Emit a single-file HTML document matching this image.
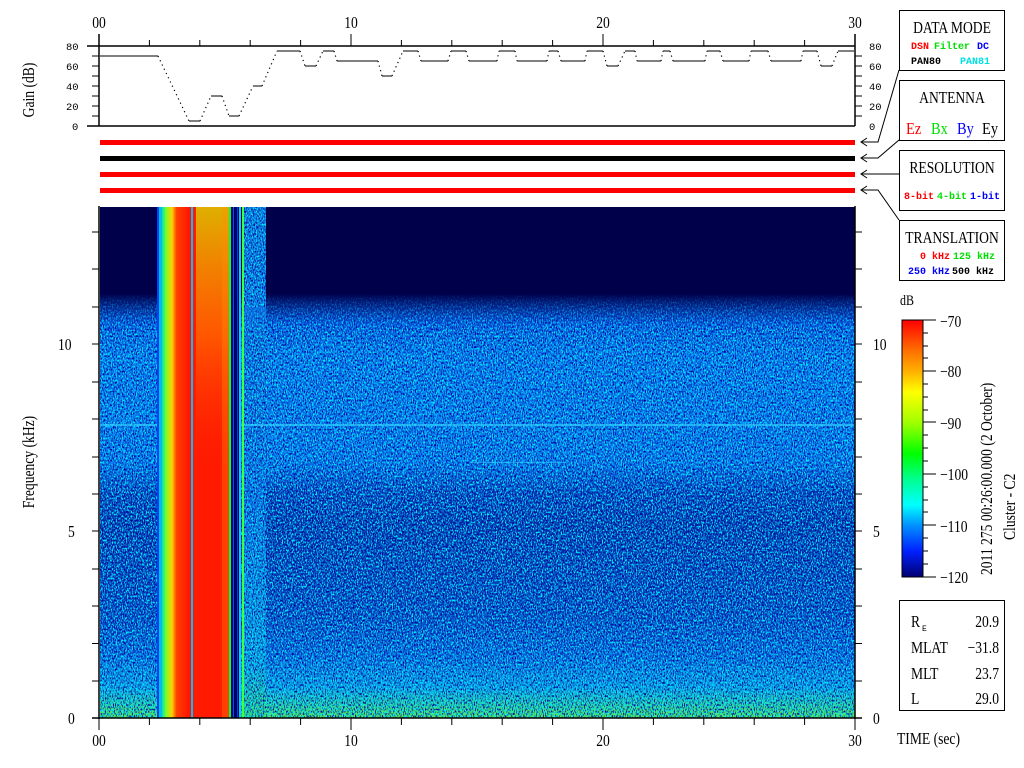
<!DOCTYPE html>
<html><head><meta charset="utf-8"><style>
html,body{margin:0;padding:0;background:#fff;width:1024px;height:768px;overflow:hidden}
svg{display:block}
.ser{font-family:"Liberation Serif",serif}
.mono{font-family:"Liberation Mono",monospace}
</style></head><body>
<svg width="1024" height="768" viewBox="0 0 1024 768" xmlns="http://www.w3.org/2000/svg">
<defs>
<linearGradient id="bg" x1="0" y1="207" x2="0" y2="718" gradientUnits="userSpaceOnUse">
<stop offset="0" stop-color="#00004a"/>
<stop offset="0.17" stop-color="#00004a"/>
<stop offset="0.23" stop-color="#0a50e0"/>
<stop offset="0.29" stop-color="#0c70f4"/>
<stop offset="0.5" stop-color="#0c6cf0"/>
<stop offset="0.56" stop-color="#0a34b8"/>
<stop offset="0.62" stop-color="#0828a8"/>
<stop offset="0.8" stop-color="#0a3cc0"/>
<stop offset="0.88" stop-color="#0c60e0"/>
<stop offset="0.94" stop-color="#10a0e8"/>
<stop offset="0.97" stop-color="#30d0a0"/>
<stop offset="1" stop-color="#60f040"/>
</linearGradient>
<linearGradient id="fade" x1="0" y1="207" x2="0" y2="718" gradientUnits="userSpaceOnUse">
<stop offset="0.17" stop-color="#000"/>
<stop offset="0.24" stop-color="#fff"/>
<stop offset="1" stop-color="#fff"/>
</linearGradient>
<mask id="m"><rect x="0" y="207" width="1024" height="511" fill="url(#fade)"/></mask>
<linearGradient id="side" x1="0" y1="207" x2="0" y2="718" gradientUnits="userSpaceOnUse">
<stop offset="0" stop-color="#1070e0"/>
<stop offset="0.55" stop-color="#1068e8"/>
<stop offset="0.9" stop-color="#10a0e0"/>
<stop offset="1" stop-color="#40e060"/>
</linearGradient>
<linearGradient id="cb" x1="0" y1="0" x2="0" y2="1">
<stop offset="0" stop-color="#ff0000"/>
<stop offset="0.12" stop-color="#ff7000"/>
<stop offset="0.2" stop-color="#ffb000"/>
<stop offset="0.28" stop-color="#ffff00"/>
<stop offset="0.4" stop-color="#a0ff00"/>
<stop offset="0.52" stop-color="#00ff00"/>
<stop offset="0.62" stop-color="#00ff90"/>
<stop offset="0.72" stop-color="#00ffff"/>
<stop offset="0.8" stop-color="#0090ff"/>
<stop offset="0.9" stop-color="#0020ff"/>
<stop offset="1" stop-color="#000070"/>
</linearGradient>
<linearGradient id="band" x1="0" y1="0" x2="1" y2="0">
<stop offset="0" stop-color="#00e0c0"/>
<stop offset="0.15" stop-color="#80ff20"/>
<stop offset="0.35" stop-color="#ffd000"/>
<stop offset="0.5" stop-color="#ff4000"/>
<stop offset="1" stop-color="#ff1000"/>
</linearGradient>
<linearGradient id="topy" x1="0" y1="0" x2="0" y2="1">
<stop offset="0" stop-color="#d0f000" stop-opacity="0.7"/>
<stop offset="0.5" stop-color="#ffb000" stop-opacity="0.4"/>
<stop offset="1" stop-color="#ff4000" stop-opacity="0"/>
</linearGradient>
<filter id="spk" x="0" y="0" width="1" height="1">
<feTurbulence type="fractalNoise" baseFrequency="0.9 0.45" numOctaves="1" seed="3"/>
<feColorMatrix values="0 0 0 0 0  0 0 0 0 0  0 0 0 0 0.3  4 0 0 0 -1.9"/>
</filter>
<filter id="spk2" x="0" y="0" width="1" height="1">
<feTurbulence type="fractalNoise" baseFrequency="0.8 0.5" numOctaves="1" seed="9"/>
<feColorMatrix values="0 0 0 0 0  0 0 0 0 0.85  0 0 0 0 1  0 5 0 0 -2.2"/>
</filter>
</defs>

<!-- spectrogram -->
<rect x="100" y="207" width="755" height="511" fill="url(#bg)"/>
<rect x="244" y="207" width="22" height="511" fill="url(#side)"/>
<g mask="url(#m)">
<rect x="100" y="280" width="755" height="438" filter="url(#spk2)"/>
<rect x="100" y="280" width="755" height="438" filter="url(#spk)"/>
</g>
<rect x="244" y="207" width="22" height="100" filter="url(#spk2)"/>
<rect x="244" y="207" width="22" height="100" filter="url(#spk)"/>
<rect x="100" y="424" width="755" height="2" fill="#30d0ff" opacity="0.7"/>
<rect x="470" y="462" width="95" height="1" fill="#30d0ff" opacity="0.6"/>
<!-- vertical band -->
<rect x="157" y="207" width="2" height="511" fill="#0040ff"/>
<rect x="159" y="207" width="3" height="511" fill="#00c0e0"/>
<rect x="162" y="207" width="29" height="511" fill="url(#band)"/>
<rect x="191" y="207" width="2" height="511" fill="#00c0ff"/>
<rect x="193" y="207" width="36" height="511" fill="#ff1a00"/>
<rect x="196" y="207" width="33" height="260" fill="url(#topy)"/>
<rect x="222" y="207" width="7" height="511" fill="#ff9000" opacity="0.35"/>
<rect x="229" y="207" width="2" height="511" fill="#00ff40"/>
<rect x="231" y="207" width="8" height="511" fill="#000060"/>
<rect x="233" y="207" width="1" height="511" fill="#0050ff"/>
<rect x="237" y="207" width="1" height="511" fill="#0040e0"/>
<rect x="239" y="207" width="2" height="511" fill="#00d0ff"/>
<rect x="242" y="207" width="2" height="511" fill="#40ff40"/>

<!-- spectrogram axes -->
<g stroke="#000" stroke-width="1.5" fill="none">
<line x1="99" y1="206" x2="99" y2="719"/>
<line x1="855" y1="206" x2="855" y2="719"/>
<line x1="92" y1="718" x2="862" y2="718"/>
</g>
<g stroke="#000" stroke-width="1">
<path d="M92 718H99M92 681H99M92 643.5H99M92 606H99M92 569H99M92 531H99M92 494H99M92 457H99M92 419H99M92 382H99M92 344H99M92 307H99M92 269H99M92 232H99"/>
<path d="M855 718H862M855 681H862M855 643.5H862M855 606H862M855 569H862M855 531H862M855 494H862M855 457H862M855 419H862M855 382H862M855 344H862M855 307H862M855 269H862M855 232H862"/>
<path d="M99 718V730M149.4 718V725M199.8 718V725M250.2 718V725M300.6 718V725M351 718V730M401.4 718V725M451.8 718V725M502.2 718V725M552.6 718V725M603 718V730M653.4 718V725M703.8 718V725M754.2 718V725M804.6 718V725M855 718V730"/>
</g>
<g class="ser" font-size="17" fill="#000">
<text x="68" y="724" transform="translate(68,0) scale(0.8,1) translate(-68,0)">0</text>
<text x="68" y="537" transform="translate(68,0) scale(0.8,1) translate(-68,0)">5</text>
<text x="58" y="350" transform="translate(58,0) scale(0.8,1) translate(-58,0)">10</text>
<text x="873" y="724" transform="translate(873,0) scale(0.8,1) translate(-873,0)">0</text>
<text x="873" y="537" transform="translate(873,0) scale(0.8,1) translate(-873,0)">5</text>
<text x="873" y="350" transform="translate(873,0) scale(0.8,1) translate(-873,0)">10</text>
<g text-anchor="middle">
<text x="99" y="746" transform="translate(99,0) scale(0.8,1) translate(-99,0)">00</text>
<text x="351" y="746" transform="translate(351,0) scale(0.8,1) translate(-351,0)">10</text>
<text x="603" y="746" transform="translate(603,0) scale(0.8,1) translate(-603,0)">20</text>
<text x="855" y="746" transform="translate(855,0) scale(0.8,1) translate(-855,0)">30</text>
<text x="99" y="28" transform="translate(99,0) scale(0.8,1) translate(-99,0)">00</text>
<text x="351" y="28" transform="translate(351,0) scale(0.8,1) translate(-351,0)">10</text>
<text x="603" y="28" transform="translate(603,0) scale(0.8,1) translate(-603,0)">20</text>
<text x="855" y="28" transform="translate(855,0) scale(0.8,1) translate(-855,0)">30</text>
</g>
<text transform="translate(34,462) rotate(-90) scale(0.8,1)" text-anchor="middle">Frequency (kHz)</text>
<text transform="translate(34,90) rotate(-90) scale(0.8,1)" text-anchor="middle">Gain (dB)</text>
<text x="897" y="744" transform="translate(897,0) scale(0.8,1) translate(-897,0)">TIME (sec)</text>
<text x="900" y="305" font-size="15" transform="translate(900,0) scale(0.8,1) translate(-900,0)">dB</text>
</g>

<!-- gain panel -->
<g stroke="#000" stroke-width="1.5" fill="none">
<line x1="87" y1="46" x2="855" y2="46"/>
<line x1="87" y1="126" x2="855" y2="126"/>
<line x1="99" y1="34" x2="99" y2="126"/>
<line x1="855" y1="34" x2="855" y2="126"/>
</g>
<g stroke="#000" stroke-width="1">
<path d="M149.4 46V40M199.8 46V40M250.2 46V40M300.6 46V40M351 46V34M401.4 46V40M451.8 46V40M502.2 46V40M552.6 46V40M603 46V34M653.4 46V40M703.8 46V40M754.2 46V40M804.6 46V40"/>
<path d="M92 56H99M92 66H99M92 76H99M92 86H99M92 96H99M92 106H99M92 116H99"/>
<path d="M855 56H862M855 66H862M855 76H862M855 86H862M855 96H862M855 106H862M855 116H862"/>
</g>
<g class="mono" font-size="10.5" fill="#000">
<text x="66" y="50">80</text><text x="66" y="70">60</text><text x="66" y="90">40</text><text x="66" y="110">20</text><text x="72" y="130">0</text>
<text x="869" y="50">80</text><text x="869" y="70">60</text><text x="869" y="90">40</text><text x="869" y="110">20</text><text x="869" y="130">0</text>
</g>
<g stroke="#000" stroke-width="1" fill="none">
<path d="M100 56H158M189 121H200M211 96H222M229 116H239M253 86H262M277 51H300M305 66H316M323 51H334M337 61H378M382 76H392M403 51H418M421 61H448M451 51H466M469 61H497M499 51H515M517 61H547M549 51H558M561 61H585M587 51H603M607 66H618M625 51H635M637 61H661M663 51H670M673 61H705M707 51H720M723 61H749M751 51H768M771 61H801M803 51H817M821 66H832M838 51H854"/>
</g>
<g stroke="#000" stroke-width="1.2" fill="none" stroke-dasharray="1.2 3.5">
<path d="M158 56L189 121M200 121L211 96M222 96L229 116M239 116L253 86M262 86L277 51M300 51L305 66M316 66L323 51M334 51L337 61M378 61L382 76M392 76L403 51M418 51L421 61M448 61L451 51M466 51L469 61M497 61L499 51M515 51L517 61M547 61L549 51M558 51L561 61M585 61L587 51M603 51L607 66M618 66L625 51M635 51L637 61M661 61L663 51M670 51L673 61M705 61L707 51M720 51L723 61M749 61L751 51M768 51L771 61M801 61L803 51M817 51L821 66M832 66L838 51"/>
</g>

<!-- status bars -->
<rect x="100" y="140" width="755" height="5" fill="#ff0000"/>
<rect x="100" y="156" width="755" height="5" fill="#000"/>
<rect x="100" y="172" width="755" height="5" fill="#ff0000"/>
<rect x="100" y="188" width="755" height="5" fill="#ff0000"/>

<!-- boxes -->
<g stroke="#000" stroke-width="1" fill="none">
<rect x="899.5" y="10.5" width="105" height="60"/>
<rect x="899.5" y="80.5" width="105" height="60"/>
<rect x="899.5" y="150.5" width="105" height="60"/>
<rect x="899.5" y="220.5" width="105" height="60"/>
<rect x="899.5" y="600.5" width="105" height="110"/>
<path d="M899 70L878 142H861M899 140L878 158H861M899 174H861M899 220L878 190H861"/>
<path d="M867 138L861 142L867 146M867 154L861 158L867 162M867 170L861 174L867 178M867 186L861 190L867 194"/>
</g>
<g class="ser" font-size="17" fill="#000" text-anchor="middle">
<text x="952" y="33" transform="translate(952,0) scale(0.8,1) translate(-952,0)">DATA MODE</text>
<text x="952" y="103" transform="translate(952,0) scale(0.8,1) translate(-952,0)">ANTENNA</text>
<text x="952" y="173" transform="translate(952,0) scale(0.8,1) translate(-952,0)">RESOLUTION</text>
<text x="952" y="243" transform="translate(952,0) scale(0.8,1) translate(-952,0)">TRANSLATION</text>
</g>
<g class="ser" font-size="17">
<text x="906" y="134" fill="#ff0000" transform="translate(906,0) scale(0.85,1) translate(-906,0)">Ez</text>
<text x="931" y="134" fill="#00e000" transform="translate(931,0) scale(0.85,1) translate(-931,0)">Bx</text>
<text x="957" y="134" fill="#0000ff" transform="translate(957,0) scale(0.85,1) translate(-957,0)">By</text>
<text x="982" y="134" fill="#000" transform="translate(982,0) scale(0.85,1) translate(-982,0)">Ey</text>
</g>
<g class="mono" font-size="10" font-weight="bold">
<text x="911" y="49" fill="#ff0000">DSN</text>
<text x="934" y="49" fill="#00e000">Filter</text>
<text x="977" y="49" fill="#0000ff">DC</text>
<text x="911" y="64" fill="#000">PAN80</text>
<text x="960" y="64" fill="#00e0e0">PAN81</text>
<text x="904" y="199" fill="#ff0000">8-bit</text>
<text x="937" y="199" fill="#00e000">4-bit</text>
<text x="970" y="199" fill="#0000ff">1-bit</text>
<text x="920" y="259" fill="#ff0000">0 kHz</text>
<text x="953" y="259" fill="#00e000">125 kHz</text>
<text x="908" y="274" fill="#0000ff">250 kHz</text>
<text x="952" y="274" fill="#000">500 kHz</text>
</g>

<!-- colorbar -->
<rect x="902" y="320" width="21" height="257" fill="url(#cb)"/>
<rect x="902" y="320" width="21" height="257" fill="none" stroke="#000" stroke-width="1"/>
<g stroke="#000" stroke-width="1">
<path d="M923 320H936M923 333H928M923 346H928M923 358H928M923 371H936M923 384H928M923 397H928M923 410H928M923 422H936M923 435H928M923 448H928M923 461H928M923 474H936M923 487H928M923 500H928M923 512H928M923 525H936M923 538H928M923 551H928M923 564H928M923 577H936"/>
</g>
<g class="ser" font-size="17" fill="#000">
<text x="940" y="327" transform="translate(940,0) scale(0.8,1) translate(-940,0)">−70</text>
<text x="940" y="377" transform="translate(940,0) scale(0.8,1) translate(-940,0)">−80</text>
<text x="940" y="429" transform="translate(940,0) scale(0.8,1) translate(-940,0)">−90</text>
<text x="940" y="480" transform="translate(940,0) scale(0.8,1) translate(-940,0)">−100</text>
<text x="940" y="532" transform="translate(940,0) scale(0.8,1) translate(-940,0)">−110</text>
<text x="940" y="583" transform="translate(940,0) scale(0.8,1) translate(-940,0)">−120</text>
<text transform="translate(992,575) rotate(-90) scale(0.8,1)">2011 275 00:26:00.000 (2 October)</text>
<text transform="translate(1015,540) rotate(-90) scale(0.8,1)">Cluster - C2</text>
</g>
<!-- info box -->
<g class="ser" font-size="17" fill="#000">
<text x="911" y="627" transform="translate(911,0) scale(0.8,1) translate(-911,0)">R</text>
<text x="922" y="631" font-size="8" class="mono">E</text>
<text x="911" y="653" transform="translate(911,0) scale(0.8,1) translate(-911,0)">MLAT</text>
<text x="911" y="679" transform="translate(911,0) scale(0.8,1) translate(-911,0)">MLT</text>
<text x="911" y="704" transform="translate(911,0) scale(0.8,1) translate(-911,0)">L</text>
<g text-anchor="end">
<text x="999" y="627" transform="translate(999,0) scale(0.8,1) translate(-999,0)">20.9</text>
<text x="999" y="653" transform="translate(999,0) scale(0.8,1) translate(-999,0)">−31.8</text>
<text x="999" y="679" transform="translate(999,0) scale(0.8,1) translate(-999,0)">23.7</text>
<text x="999" y="704" transform="translate(999,0) scale(0.8,1) translate(-999,0)">29.0</text>
</g>
</g>
</svg>
</body></html>
